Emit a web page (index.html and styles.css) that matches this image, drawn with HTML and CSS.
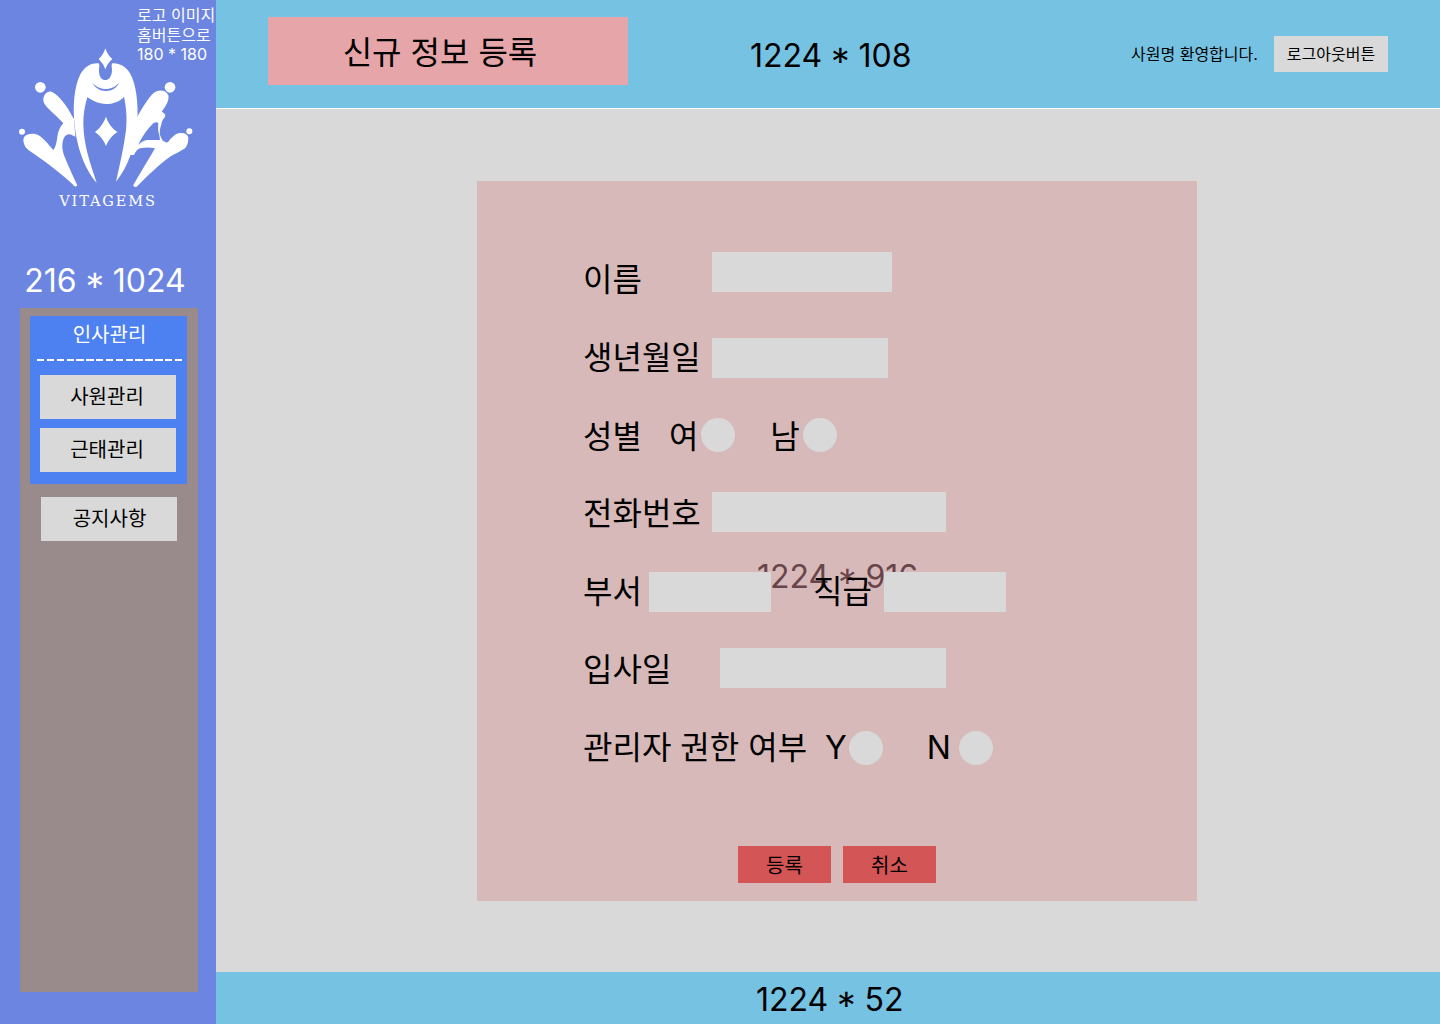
FILE: index.html
```html
<!DOCTYPE html>
<html lang="ko">
<head>
  <meta charset="UTF-8" />
  <title>신규 정보 등록</title>
  <link rel="stylesheet" href="styles.css">
</head>
<body>
  <aside class="sidebar">
    <div class="logo-note">로고 이미지<br>홈버튼으로<br>180 * 180</div>
    <div class="logo">
      <svg class="logo-mark" viewBox="54 138 528 426" width="176" height="142">
        <g fill="#fff">
          <path d="M316 145 Q322 165 337 177 Q322 190 316 208 Q310 190 296 177 Q310 165 316 145 Z"/>
          <path d="M318 350 Q326 378 352 396 Q328 412 318 438 Q308 412 285 396 Q308 378 318 350 Z"/>
          <circle cx="121" cy="262" r="16"/>
          <circle cx="510" cy="262" r="16"/>
          <circle cx="66" cy="395" r="9"/>
          <circle cx="568" cy="394" r="9"/>
          <path d="M296 190 C280 188 255 195 240 225 C222 262 218 320 224 375 C230 440 255 510 290 548 C270 490 250 430 250 370 C250 340 255 315 262 292 C280 305 300 312 318 312 C338 312 360 305 372 290 C378 320 382 350 378 390 C372 440 360 490 348 545 C385 500 405 440 412 370 C416 310 408 250 390 220 C378 198 355 188 337 190 C333 196 336 200 336 212 C335 230 326 240 316 240 C305 240 297 230 297 212 C297 203 300 196 296 190 Z"/>
          <path d="M130 300 C130 285 140 272 155 275 C185 290 210 335 222 358 L226 410 L215 405 C205 400 197 405 193 412 C183 430 186 455 197 478 C208 505 222 535 232 556 C228 562 224 560 220 555 C190 525 130 480 85 450 C70 438 68 420 72 412 C78 400 100 398 115 405 C135 418 150 440 160 450 C168 440 170 425 172 410 C174 395 180 380 190 370 C170 345 130 320 130 300 Z"/>
          <path d="M410 355 C425 325 445 295 460 280 C470 270 495 265 505 285 C508 300 500 315 485 335 C495 340 498 345 495 350 C488 360 484 365 485 370 C480 385 478 395 480 405 C484 418 490 425 495 425 C498 428 502 428 505 425 C515 412 525 403 535 400 C550 396 565 402 565 415 C565 430 560 440 555 445 C540 455 525 462 510 470 C475 495 440 530 410 560 C405 562 400 560 400 555 C420 520 445 480 465 445 C450 442 435 442 420 445 C412 448 406 456 402 465 L392 465 L392 380 Z"/>
        </g>
        <g fill="#6b85e0">
          <path d="M415 435 C425 410 445 385 460 370 C466 366 472 366 475 370 C474 385 474 398 478 405 L480 420 C465 420 450 420 440 420 C430 422 422 428 415 435 Z"/>
          <path d="M276 246 C295 274 340 274 358 246 C345 282 292 282 276 246 Z"/>
        </g>
      </svg>
      <div class="logo-name">VITAGEMS</div>
    </div>
    <div class="size-label sidebar-size">216 * 1024</div>
    <nav class="nav">
      <div class="nav-group">
        <div class="nav-title">인사관리</div>
        <div class="nav-item">사원관리</div>
        <div class="nav-item">근태관리</div>
      </div>
      <div class="nav-item nav-notice">공지사항</div>
    </nav>
  </aside>

  <div class="main">
    <header class="header">
      <div class="page-title">신규 정보 등록</div>
      <div class="size-label header-size">1224 * 108</div>
      <div class="welcome">사원명 환영합니다.</div>
      <div class="logout">로그아웃버튼</div>
    </header>

    <main class="content">
      <form class="panel">
        <div class="panel-size">1224 * 916</div>
        <div class="row row-name">
          <span class="label">이름</span>
          <span class="input input-name"></span>
        </div>
        <div class="row row-birth">
          <span class="label">생년월일</span>
          <span class="input input-birth"></span>
        </div>
        <div class="row row-gender">
          <span class="label">성별</span>
          <span class="label gender-f">여</span>
          <span class="radio"></span>
          <span class="label gender-m">남</span>
          <span class="radio"></span>
        </div>
        <div class="row row-phone">
          <span class="label">전화번호</span>
          <span class="input input-phone"></span>
        </div>
        <div class="row row-dept">
          <span class="label">부서</span>
          <span class="input input-dept"></span>
          <span class="label rank">직급</span>
          <span class="input input-rank"></span>
        </div>
        <div class="row row-join">
          <span class="label">입사일</span>
          <span class="input input-join"></span>
        </div>
        <div class="row row-admin">
          <span class="label">관리자 권한 여부</span>
          <span class="label admin-y">Y</span>
          <span class="radio"></span>
          <span class="label admin-n">N</span>
          <span class="radio"></span>
        </div>
        <div class="actions">
          <button type="button" class="btn">등록</button>
          <button type="button" class="btn">취소</button>
        </div>
      </form>
    </main>

    <footer class="footer">
      <div class="size-label">1224 * 52</div>
    </footer>
  </div>
</body>
</html>
```

FILE: styles.css
```css
* {
  box-sizing: border-box;
}

body {
  margin: 0;
  width: 1440px;
  height: 1024px;
  display: flex;
  overflow: hidden;
  font-family: Inter, "Noto Sans CJK KR", sans-serif;
  color: #000;
}

.sidebar {
  position: relative;
  width: 216px;
  height: 1024px;
  flex-shrink: 0;
  background: #6b85e0;
  color: #fff;
  padding: 0 18px 0 20px;
  display: flex;
  flex-direction: column;
}

.logo-note {
  position: absolute;
  left: 137px;
  top: 6px;
  font-size: 16px;
  line-height: 19.5px;
  white-space: nowrap;
}

.logo {
  margin: 46px 0 0 -2px;
  height: 165px;
}

.logo-mark {
  display: block;
}

.logo-name {
  margin-top: 3px;
  width: 180px;
  text-align: center;
  font-family: "DejaVu Serif", serif;
  font-size: 14.5px;
  line-height: 20px;
  letter-spacing: 1.9px;
}

.size-label {
  font-size: 32px;
  line-height: 39px;
  white-space: nowrap;
  word-spacing: -1.2px;
}

.sidebar-size {
  margin-top: 50px;
  text-align: center;
  margin-left: -8px;
}

.nav {
  margin-top: 8px;
  width: 178px;
  height: 684px;
  background: #998b8b;
  padding-top: 8px;
}

.nav-group {
  width: 157px;
  height: 168px;
  margin-left: 10px;
  background: #4d80f0;
  padding: 0 11px 0 10px;
}

.nav-title {
  height: 45px;
  margin: 0 -6px 0 -3px;
  text-align: center;
  font-size: 20px;
  line-height: 38px;
  color: #fff;
  background: repeating-linear-gradient(90deg, #fff 0 7.4px, transparent 7.4px 9.85px) bottom / 100% 2px no-repeat;
}

.nav-item {
  width: 136px;
  height: 44px;
  margin-top: 14px;
  background: #d9d9d9;
  color: #000;
  text-align: center;
  font-size: 20px;
  line-height: 44px;
  padding-right: 2px;
}

.nav-item + .nav-item {
  margin-top: 9px;
}

.nav-notice {
  margin: 13px 0 0 21px;
  padding: 0 0 0 1px;
}

.main {
  width: 1224px;
  height: 1024px;
  display: flex;
  flex-direction: column;
}

.header {
  height: 109px;
  flex-shrink: 0;
  background: #76c2e3;
  border-bottom: 1px solid #fff;
  display: flex;
  align-items: flex-start;
  padding: 0 52px;
}

.page-title {
  width: 360px;
  height: 68px;
  margin-top: 17px;
  padding-right: 16px;
  background: #e6a5a8;
  text-align: center;
  font-size: 32px;
  line-height: 72px;
}

.header-size {
  margin: 36px 0 0 122px;
}

.welcome {
  margin: 44px 0 0 auto;
  width: 143px;
  font-size: 16px;
  line-height: 20px;
  white-space: nowrap;
}

.logout {
  width: 114px;
  height: 36px;
  margin-top: 36px;
  background: #d9d9d9;
  text-align: center;
  font-size: 16px;
  line-height: 36px;
}

.content {
  flex: 1;
  background: #d9d9d9;
  padding: 72px 0 0 261px;
}

.panel {
  position: relative;
  width: 720px;
  height: 720px;
  background: #d8b9b9;
  padding-left: 107px;
}

.panel-size {
  position: absolute;
  left: 280px;
  top: 376px;
  font-size: 32px;
  line-height: 39px;
  word-spacing: -1.2px;
  color: #69454b;
  white-space: nowrap;
}

.row {
  position: relative;
  display: flex;
  align-items: center;
  height: 40px;
  font-size: 32px;
}

.label {
  height: 40px;
  line-height: 40px;
  white-space: nowrap;
  margin-left: -1px;
}

.input {
  height: 40px;
  background: #d9d9d9;
}

.radio {
  width: 34px;
  height: 34px;
  border-radius: 50%;
  background: #d9d9d9;
}

.row-name {
  height: 111px;
  padding-top: 71px;
}

.row-name .label {
  width: 129px;
  padding-top: 8px;
}

.input-name {
  width: 180px;
}

.row-birth {
  margin-top: 46px;
}

.row-birth .label {
  width: 129px;
}

.input-birth {
  width: 176px;
}

.row-gender {
  margin-top: 40px;
  height: 34px;
}

.row-gender .label {
  padding-top: 2px;
}

.gender-f {
  margin-left: 27px;
}

.gender-f + .radio {
  margin-left: 3px;
}

.gender-m {
  margin-left: 35px;
}

.gender-m + .radio {
  margin-left: 3px;
}

.row-phone {
  margin-top: 40px;
}

.row-phone .label {
  width: 129px;
  padding-top: 2px;
}

.input-phone {
  width: 234px;
}

.row-dept {
  margin-top: 40px;
}

.row-dept .label {
  width: 66px;
}

.input-dept {
  width: 122px;
}

.row-dept .rank {
  width: 113px;
  margin-left: 0;
  padding-left: 42px;
}

.input-rank {
  width: 122px;
}

.row-join {
  margin-top: 36px;
}

.row-join .label {
  width: 137px;
  padding-top: 2px;
}

.input-join {
  width: 226px;
}

.row-admin {
  margin-top: 43px;
  height: 34px;
}

.admin-y {
  margin-left: 18px;
}

.admin-y + .radio {
  margin-left: 2px;
}

.admin-n {
  margin-left: 44px;
}

.admin-n + .radio {
  margin-left: 8px;
}

.actions {
  display: flex;
  gap: 12px;
  margin: 81px 0 0 154px;
}

.btn {
  width: 93px;
  height: 37px;
  border: 0;
  padding: 0;
  background: #d45555;
  color: #000;
  font-family: inherit;
  font-size: 20px;
}

.footer {
  height: 52px;
  flex-shrink: 0;
  background: #76c2e3;
  padding-left: 540px;
}

.footer .size-label {
  line-height: 56px;
}
```
